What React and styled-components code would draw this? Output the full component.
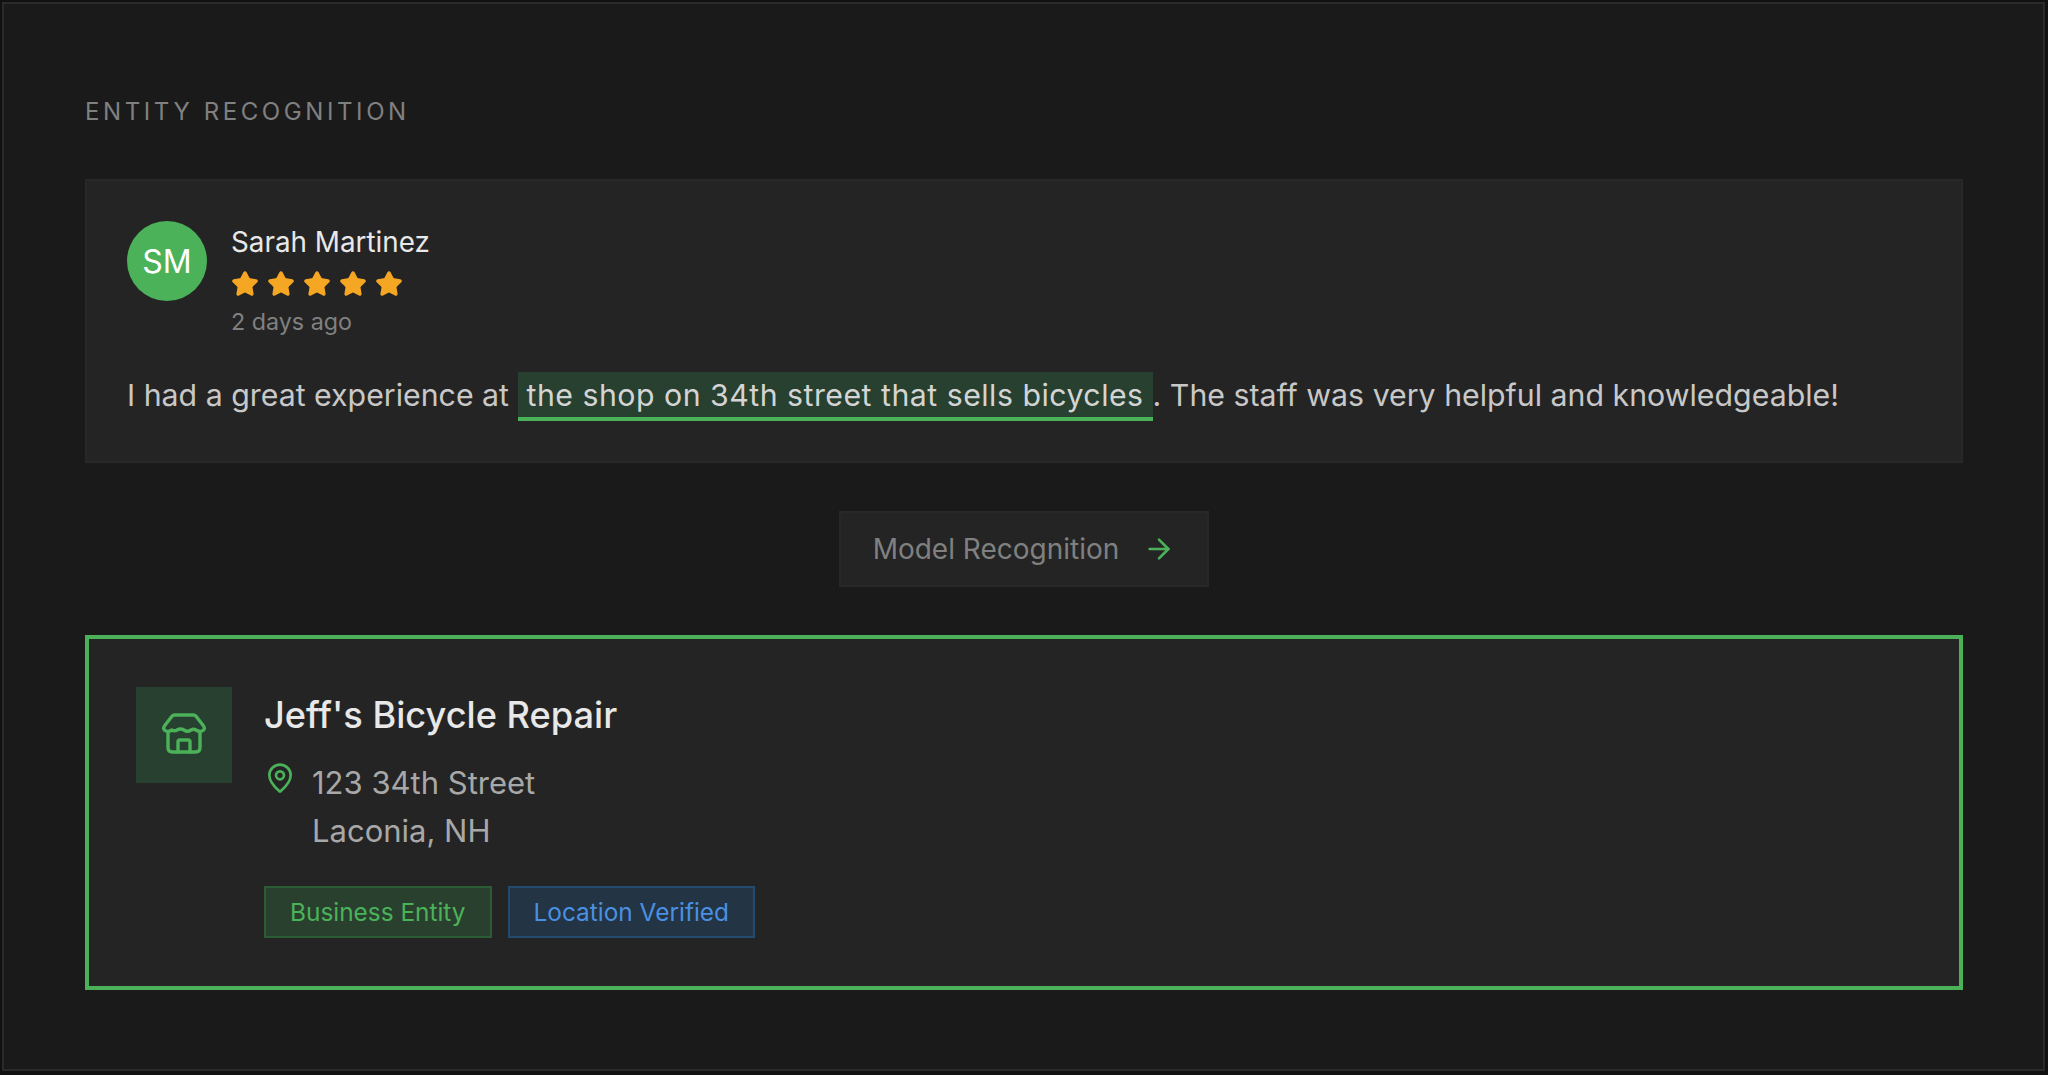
import styled, { createGlobalStyle } from 'styled-components';
import { ArrowRight, MapPin, Star } from 'lucide-react';

const GREEN = '#4bb25a';

const GlobalStyle = createGlobalStyle`
  * {
    box-sizing: border-box;
  }

  body {
    margin: 0;
    background: #111111;
    font-family: Inter, 'Liberation Sans', sans-serif;
  }
`;

const STARS = [1, 2, 3, 4, 5];

const StoreIcon = () => (
  <svg width="48" height="48" viewBox="0 0 48 48" fill="none" stroke={GREEN} strokeWidth="3.4" strokeLinecap="round" strokeLinejoin="round">
    <path d="M14.5 4H33.5Q35 4 36 5.3L43.6 15Q45.6 18.6 42 20Q39 21 36 19Q33.5 17.6 31 19Q27.5 21.4 24 19Q20.5 17 17 19Q14.5 20.6 12 19Q9 21 6 20Q2.4 18.6 4.4 15L12 5.3Q13 4 14.5 4Z" />
    <path d="M8 21V36.5Q8 41 12.5 41H35.5Q40 41 40 36.5V21" />
    <path d="M18 41V31Q18 29 20 29H28Q30 29 30 31V41" />
  </svg>
);

const App = () => {
  return (
    <>
      <GlobalStyle />
      <Frame>
        <Heading>ENTITY RECOGNITION</Heading>
        <ReviewCard>
          <ReviewHeader>
            <Avatar>SM</Avatar>
            <div>
              <ReviewerName>Sarah Martinez</ReviewerName>
              <Stars>
                {STARS.map((n) => (
                  <Star key={n} size={28} color="#f5a623" fill="#f5a623" />
                ))}
              </Stars>
              <ReviewDate>2 days ago</ReviewDate>
            </div>
          </ReviewHeader>
          <ReviewText>
            I had a great experience at <Highlight>the shop on 34th street that sells bicycles</Highlight>. The staff was very helpful and knowledgeable!
          </ReviewText>
        </ReviewCard>
        <ButtonRow>
          <ModelButton>
            Model Recognition
            <ArrowRight size={32} color={GREEN} />
          </ModelButton>
        </ButtonRow>
        <EntityCard>
          <IconBox>
            <StoreIcon />
          </IconBox>
          <EntityBody>
            <EntityName>Jeff's Bicycle Repair</EntityName>
            <Address>
              <PinSlot>
                <MapPin size={32} color={GREEN} />
              </PinSlot>
              <div>
                123 34th Street
                <br />
                Laconia, NH
              </div>
            </Address>
            <Tags>
              <Tag>Business Entity</Tag>
              <Tag $blue>Location Verified</Tag>
            </Tags>
          </EntityBody>
        </EntityCard>
      </Frame>
    </>
  );
};

export default App;

const Frame = styled.div`
  width: 2043px;
  height: 1069px;
  margin: 2px 0 0 2px;
  padding: 93px 80px 80px 81px;
  background: #1a1a1a;
  border: 2px solid #2a2a2a;
`;

const Heading = styled.h2`
  margin: 0 0 53px;
  color: #808080;
  font-size: 24px;
  font-weight: 400;
  line-height: 29px;
  letter-spacing: 3.6px;
`;

const ReviewCard = styled.section`
  padding: 40px;
  background: #242424;
  border: 2px solid #282828;
`;

const ReviewHeader = styled.div`
  display: flex;
  gap: 24px;
  margin-bottom: 29px;
`;

const Avatar = styled.div`
  display: flex;
  align-items: center;
  justify-content: center;
  width: 80px;
  height: 80px;
  border-radius: 50%;
  background: ${GREEN};
  color: #ffffff;
  font-size: 32px;
`;

const ReviewerName = styled.div`
  color: #e8e8e8;
  font-size: 27.8px;
  line-height: 42px;
`;

const Stars = styled.div`
  display: flex;
  gap: 8px;
  height: 30px;
  margin-top: 7px;
`;

const ReviewDate = styled.div`
  margin-top: 4px;
  color: #808080;
  font-size: 23.3px;
  line-height: 36px;
`;

const ReviewText = styled.p`
  margin: 0;
  color: #c8c8c8;
  font-size: 30.3px;
  line-height: 52px;
`;

const Highlight = styled.span`
  padding: 5px 9px 4px;
  background: #274030;
  border-bottom: 4px solid ${GREEN};
  color: #d4d4d4;
  letter-spacing: 0.48px;
`;

const ButtonRow = styled.div`
  display: flex;
  justify-content: center;
  margin: 48px 0;
`;

const ModelButton = styled.div`
  display: flex;
  align-items: center;
  gap: 24px;
  height: 76px;
  padding: 0 32px;
  background: #242424;
  border: 2px solid #272727;
  color: #808080;
  font-size: 28px;
`;

const EntityCard = styled.section`
  display: flex;
  gap: 32px;
  height: 355px;
  padding: 48px 48px 48px 47px;
  background: #242424;
  border: 4px solid ${GREEN};
`;

const IconBox = styled.div`
  display: flex;
  flex: none;
  align-items: center;
  justify-content: center;
  width: 96px;
  height: 96px;
  background: #274030;
`;

const EntityBody = styled.div`
  display: flex;
  flex-direction: column;
`;

const EntityName = styled.h3`
  margin: 0;
  color: #e8e8e8;
  font-size: 36.2px;
  font-weight: 500;
  line-height: 56px;
`;

const Address = styled.div`
  display: flex;
  gap: 16px;
  margin-top: 16px;
  color: #a8a8a8;
  font-size: 31px;
  line-height: 48px;
`;

const PinSlot = styled.div`
  display: flex;
  height: 32px;
  margin-top: 3px;
`;

const Tags = styled.div`
  display: flex;
  gap: 16px;
  margin-top: 31px;
`;

const Tag = styled.span`
  padding: 0 24px;
  background: ${(p) => (p.$blue ? '#233444' : '#2a402f')};
  border: 2px solid ${(p) => (p.$blue ? '#234a70' : '#2c5c36')};
  color: ${(p) => (p.$blue ? '#4a90e2' : GREEN)};
  font-size: 24.4px;
  line-height: 48px;
`;
